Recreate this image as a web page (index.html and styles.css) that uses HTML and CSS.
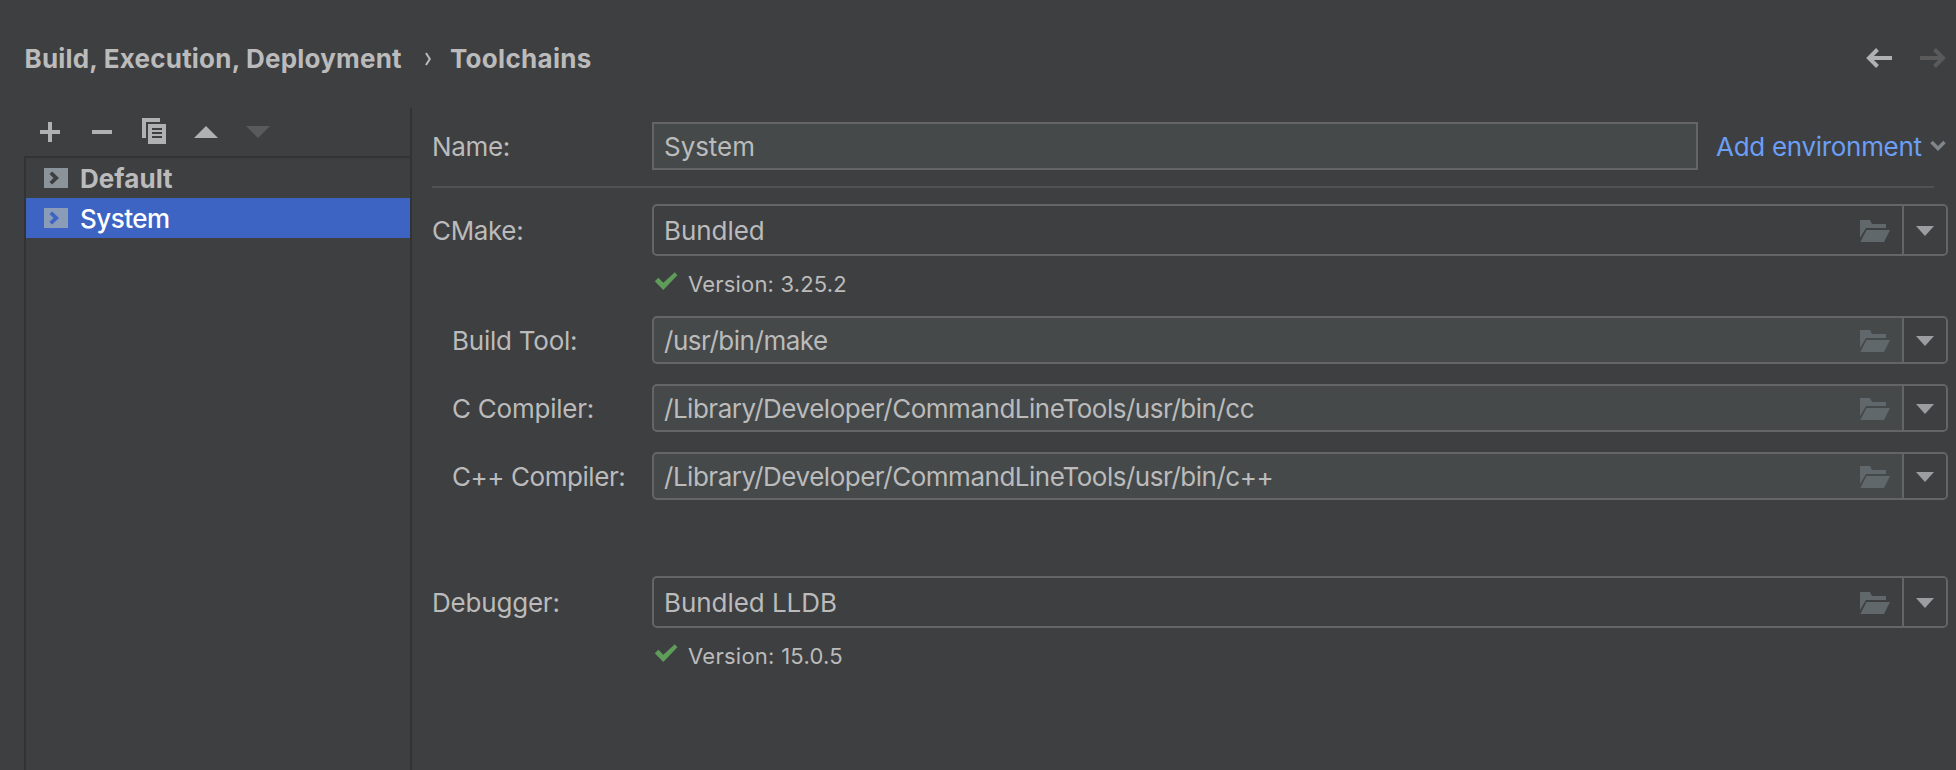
FILE: index.html
```html
<!DOCTYPE html>
<html lang="en">
<head>
<meta charset="utf-8">
<title>Toolchains</title>
<link rel="stylesheet" href="styles.css">
</head>
<body>
<svg class="defs" aria-hidden="true">
  <symbol id="folder" viewBox="0 0 30 22">
    <path d="M0 0H10L12 4H26V8H6L0 18Z"/>
    <path d="M6.5 10H30L24 22H0.3Z"/>
  </symbol>
  <symbol id="drop" viewBox="0 0 18 10"><path d="M0 0H18L9 10Z"/></symbol>
  <symbol id="check" viewBox="0 0 24 20"><path d="M0.8 10.2L4.4 6.8L9.3 11.8L20.8 1.2L23.4 4.2L9.3 19Z"/></symbol>
  <symbol id="tool" viewBox="0 0 24 20">
    <path fill-rule="evenodd" d="M0 0H24V20H0ZM5.4 6L8.2 3.4L15 10L8.2 16.6L5.4 14L9.5 10Z"/>
  </symbol>
</svg>
<div class="window">
  <header class="header">
    <nav class="crumbs">
      <span class="crumb crumb-parent">Build, Execution, Deployment</span>
      <svg class="crumb-sep" viewBox="0 0 6 14"><path d="M1 1L4.8 7L1 13"/></svg>
      <span class="crumb crumb-page">Toolchains</span>
    </nav>
    <div class="history">
      <svg class="arrow" viewBox="0 0 26 20"><path d="M26 10H4M11.5 1.5L3 10L11.5 18.5"/></svg>
      <svg class="arrow arrow-off" viewBox="0 0 26 20"><path d="M0 10H22M14.5 1.5L23 10L14.5 18.5"/></svg>
    </div>
  </header>
  <main class="content">
    <aside class="sidebar">
      <div class="toolbar">
        <svg class="tb-plus" viewBox="0 0 20 20"><path d="M8 0H12V8H20V12H12V20H8V12H0V8H8Z"/></svg>
        <svg class="tb-minus" viewBox="0 0 20 20"><path d="M0 8H20V12H0Z"/></svg>
        <svg class="tb-copy" viewBox="0 0 24 26">
          <path d="M0 0H18V4H4V20H0Z"/>
          <path fill-rule="evenodd" d="M6 6H24V26H6ZM10 10V12H20V10ZM10 14V16H20V14ZM10 18V20H20V18Z"/>
        </svg>
        <svg class="tb-up" viewBox="0 0 24 12"><path d="M0 12L12 0L24 12Z"/></svg>
        <svg class="tb-down" viewBox="0 0 24 12"><path d="M0 0H24L12 12Z"/></svg>
      </div>
      <div class="tree">
        <div class="node node-default"><svg class="node-icon"><use href="#tool"/></svg><span class="node-text">Default</span></div>
        <div class="node node-selected"><svg class="node-icon"><use href="#tool"/></svg><span class="node-text">System</span></div>
      </div>
    </aside>
    <section class="form">
      <div class="row row-name">
        <span class="label label-tight">Name:</span>
        <div class="field"><span class="value">System</span></div>
        <a class="add-env">Add environment</a>
        <svg class="link-chevron" viewBox="0 0 16 12"><path d="M1.5 2L8 8.5L14.5 2"/></svg>
      </div>
      <div class="separator"></div>
      <div class="row row-tall">
        <span class="label label-tight">CMake:</span>
        <div class="combo"><span class="value">Bundled</span><svg class="folder"><use href="#folder"/></svg><span class="combo-btn"><svg class="drop"><use href="#drop"/></svg></span></div>
      </div>
      <div class="version"><svg class="check"><use href="#check"/></svg><span class="version-text version-cmake">Version: 3.25.2</span></div>
      <div class="row row-sub row-build">
        <span class="label label-sub">Build Tool:</span>
        <div class="combo combo-edit"><span class="value value-path">/usr/bin/make</span><svg class="folder"><use href="#folder"/></svg><span class="combo-btn"><svg class="drop"><use href="#drop"/></svg></span></div>
      </div>
      <div class="row row-sub">
        <span class="label label-sub">C Compiler:</span>
        <div class="combo combo-edit"><span class="value value-path">/Library/Developer/CommandLineTools/usr/bin/cc</span><svg class="folder"><use href="#folder"/></svg><span class="combo-btn"><svg class="drop"><use href="#drop"/></svg></span></div>
      </div>
      <div class="row row-sub">
        <span class="label label-sub label-cpp">C++ Compiler:</span>
        <div class="combo combo-edit"><span class="value value-path">/Library/Developer/CommandLineTools/usr/bin/c++</span><svg class="folder"><use href="#folder"/></svg><span class="combo-btn"><svg class="drop"><use href="#drop"/></svg></span></div>
      </div>
      <div class="row row-tall row-debugger">
        <span class="label label-debugger">Debugger:</span>
        <div class="combo"><span class="value">Bundled LLDB</span><svg class="folder"><use href="#folder"/></svg><span class="combo-btn"><svg class="drop"><use href="#drop"/></svg></span></div>
      </div>
      <div class="version"><svg class="check"><use href="#check"/></svg><span class="version-text">Version: 15.0.5</span></div>
    </section>
  </main>
</div>
</body>
</html>
```
FILE: styles.css
```css
* { box-sizing: border-box; }

body {
  margin: 0;
  background: #3e3f41;
  color: #bbbbbb;
  font: 400 26px/31px Inter, "Liberation Sans", sans-serif;
  overflow: hidden;
}

svg { display: block; flex: none; }
.defs { display: none; }

.window {
  display: flex;
  flex-direction: column;
  height: 770px;
}

/* Header */
.header {
  display: flex;
  justify-content: space-between;
  height: 108px;
  padding: 43px 10px 0 24px;
}
.crumbs { display: flex; font-weight: 700; white-space: nowrap; }
.crumb-parent { width: 401px; padding-left: 0.5px; letter-spacing: 0.2px; }
.crumb-sep {
  width: 6px;
  height: 14px;
  margin: 9px 20px 0 0;
  fill: none;
  stroke: #bbbbbb;
  stroke-width: 2;
}
.crumb-page { letter-spacing: 0.3px; margin-left: -1px; }
.history { display: flex; gap: 28px; padding-top: 5px; }
.arrow { width: 26px; height: 20px; fill: none; stroke: #afb1b3; stroke-width: 4; }
.arrow-off { stroke: #5a5a5b; }

/* Sidebar */
.content { display: flex; flex: 1; }
.sidebar {
  display: flex;
  flex-direction: column;
  width: 388px;
  margin-left: 24px;
  border-right: 2px solid #323335;
}
.toolbar { display: flex; height: 48px; padding-left: 16px; fill: #afb1b3; }
.tb-plus { width: 20px; height: 20px; margin-top: 14px; }
.tb-minus { width: 20px; height: 20px; margin: 14px 0 0 32px; }
.tb-copy { width: 24px; height: 26px; margin: 10px 0 0 30px; }
.tb-up { width: 24px; height: 12px; margin: 18px 0 0 28px; }
.tb-down { width: 24px; height: 12px; margin: 18px 0 0 28px; fill: #5a5a5b; }

.tree { flex: 1; border: solid #323335; border-width: 2px 0 0 2px; }
.node { display: flex; height: 40px; padding: 5px 0 0 18px; }
.node-icon { width: 24px; height: 20px; margin: 5px 12px 0 0; fill: #8b949b; }
.node-default { font-weight: 700; letter-spacing: 0.05px; }
.node-selected {
  background: #3d63c3;
  color: #ffffff;
  font-weight: 500;
  letter-spacing: -0.5px;
}
.node-selected .node-icon { fill: #8b9cb8; }

/* Form */
.form { flex: 1; padding: 14px 8px 0 20px; white-space: nowrap; }
.row { display: flex; align-items: center; height: 48px; }
.row-tall { height: 52px; }
.row-sub { margin-top: 20px; }
.row-build { margin-top: 19px; }
.row-debugger { margin-top: 76px; }

.label { width: 220px; padding-top: 1px; }
.label-tight { letter-spacing: -0.35px; }
.label-debugger { letter-spacing: -0.2px; }
.label-sub { padding-left: 20px; letter-spacing: -0.24px; }
.label-cpp { letter-spacing: -0.44px; }

.field {
  display: flex;
  align-items: center;
  width: 1046px;
  height: 48px;
  padding-left: 10px;
  border: 2px solid #646566;
  background: #45494a;
}
.value { flex: 1; padding-top: 1px; letter-spacing: -0.05px; }
.value-path { letter-spacing: -0.48px; }
.add-env { margin-left: 18px; padding-top: 1px; color: #6b9ef5; letter-spacing: -0.3px; }
.link-chevron {
  width: 16px;
  height: 12px;
  margin-left: auto;
  margin-right: 2px;
  fill: none;
  stroke: #7f868a;
  stroke-width: 3.5;
}

.separator { width: 1502px; height: 2px; margin: 16px 0; background: #515254; }

.combo {
  display: flex;
  flex: 1;
  align-items: center;
  align-self: stretch;
  padding-left: 10px;
  border: 2px solid #646566;
  border-radius: 5px;
}
.combo-edit { background: #45494a; }
.folder { width: 30px; height: 22px; margin: 2px 12px 0 0; fill: #60686c; }
.combo-btn {
  display: flex;
  align-items: center;
  align-self: stretch;
  width: 44px;
  padding: 2px 0 0 12px;
  border-left: 2px solid #646566;
  border-radius: 0 3px 3px 0;
  background: #3e3f41;
}
.drop { width: 18px; height: 10px; fill: #9c9da0; }

.version {
  display: flex;
  height: 26px;
  margin-top: 15px;
  padding-left: 222px;
  font-size: 22px;
  line-height: 26px;
}
.check { width: 24px; height: 20px; margin-right: 10px; fill: #5f9c5a; }
.version-text { letter-spacing: 0.26px; }
.version-cmake { letter-spacing: 0.18px; }
```
